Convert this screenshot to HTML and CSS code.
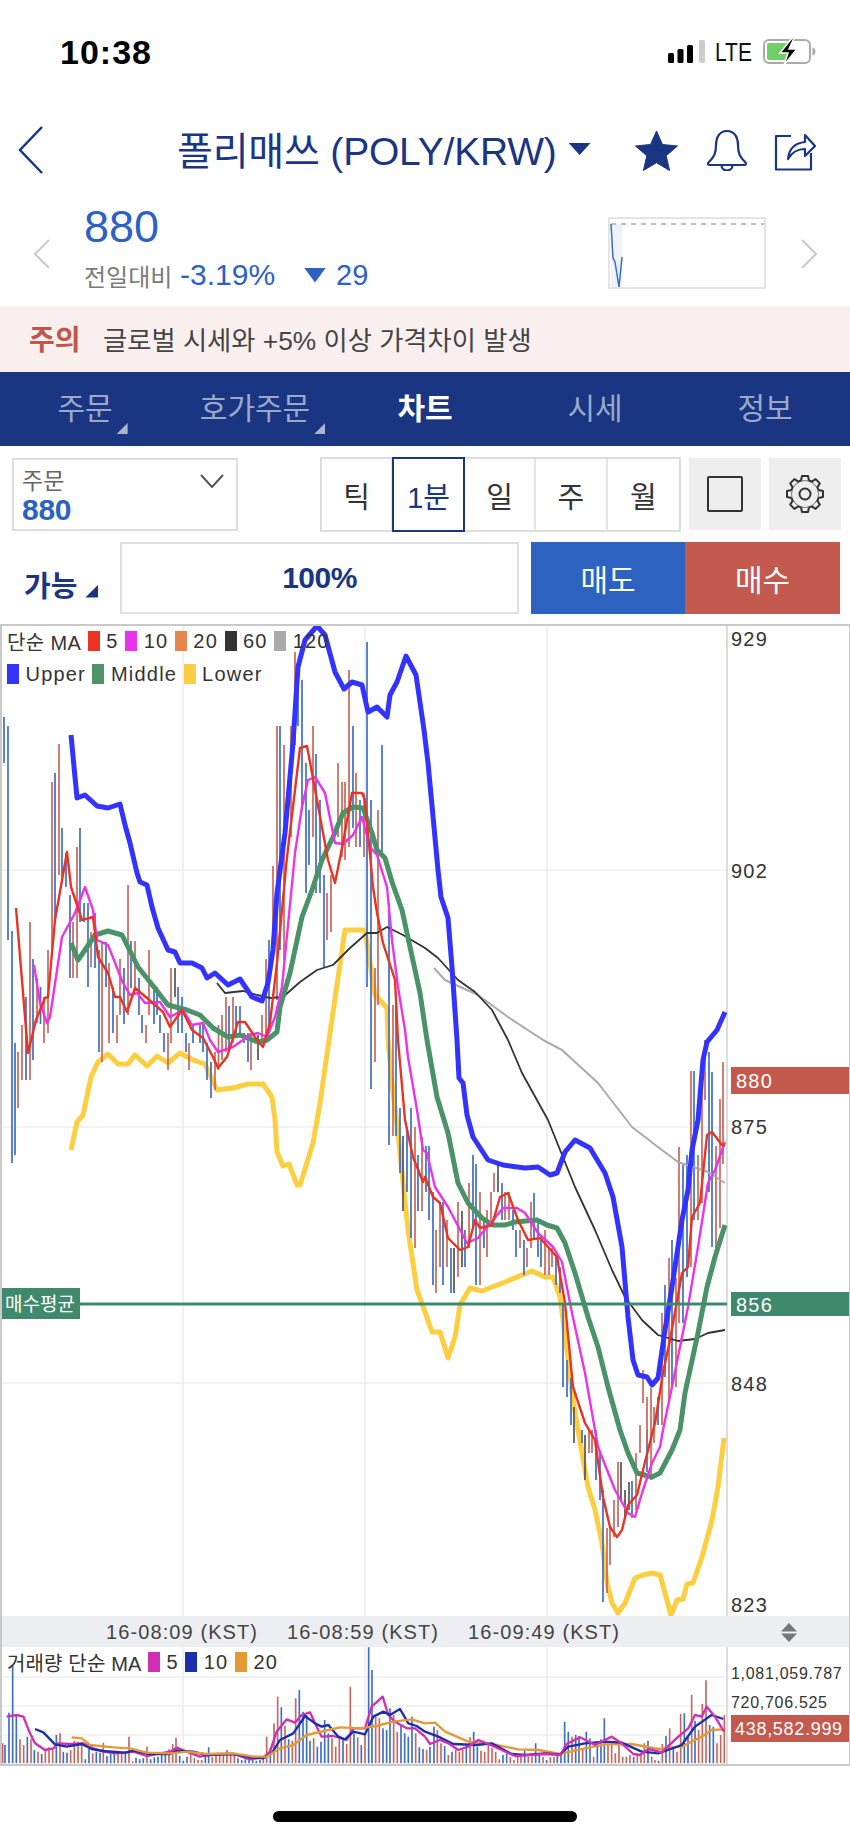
FILE: index.html
```html
<!DOCTYPE html>
<html lang="ko">
<head>
<meta charset="utf-8">
<title>폴리매쓰 (POLY/KRW)</title>
<link rel="stylesheet" href="styles.css">
</head>
<body>
<div class="page">
  <div class="status">
    <div class="clock">10:38</div>
    <div class="status-right">
      <svg class="signal" width="37" height="24" viewBox="0 0 37 24"><rect class="s-on" x="0" y="13" width="6" height="10" rx="1.5"/><rect class="s-on" x="9.500" y="9" width="6" height="14" rx="1.500"/><rect class="s-on" x="19" y="5" width="6" height="18" rx="1.500"/><rect class="s-off" x="31" y="0" width="6" height="23" rx="1.500"/></svg>
      <span class="lte">LTE</span>
      <svg class="battery" width="53" height="28" viewBox="0 0 53 28"><rect class="bat-body" x="1" y="2" width="46" height="23" rx="5"/><rect class="bat-fill" x="4" y="5" width="23" height="17" rx="2"/><path class="bat-cap" d="M49.500 9.500c2 .5 3 2 3 4s-1 3.500-3 4z"/><path class="bat-bolt" d="M29 0 17 15h8l-4 12 13-16h-8l5-11z"/></svg>
    </div>
  </div>

  <div class="appbar">
    <svg class="back" width="26" height="50" viewBox="0 0 26 50"><path d="M24 2 2 25l22 23"/></svg>
    <div class="title">폴리매쓰 (POLY/KRW)</div>
    <span class="caret"></span>
    <svg class="star" width="45" height="41" viewBox="0 0 45 41"><path d="M22.500 1l6 13.500 15 1.500-11.300 9.800 3.400 14.700-13.100-7.800-13.100 7.800 3.400-14.700L1.500 16l15-1.500z"/></svg>
    <svg class="bell" width="42" height="42" viewBox="0 0 42 42"><path d="M21 2c-8 0-11 7-11 14 0 9-2 12-7.500 17.500-1 1-.5 2.500 1 2.500h35c1.500 0 2-1.500 1-2.500C34 28 32 25 32 16c0-7-3-14-11-14z"/><path d="M15.500 36c0 3.500 2.500 5.500 5.500 5.500s5.500-2 5.500-5.500"/></svg>
    <svg class="share" width="42" height="42" viewBox="0 0 42 42"><path d="M17 7H2v33.500h35V24"/><path d="M14 30c1-10 7-16 17-17V6l10 11-10 10v-7c-8 0-13 3-17 10z"/></svg>
  </div>

  <div class="quote">
    <svg class="q-arrow" width="18" height="30" viewBox="0 0 18 30"><path d="M16 1 2 15l14 14"/></svg>
    <div class="q-info">
      <div class="q-price">880</div>
      <div class="q-change"><span class="q-label">전일대비</span><span class="q-pct">-3.19%</span><span class="q-down"></span><span class="q-diff">29</span></div>
    </div>
    <svg class="spark" width="158" height="72" viewBox="0 0 158 72"><rect class="sp-box" x="1" y="1" width="156" height="70"/><path class="sp-fill" d="M3 7h11v63H3z"/><path class="sp-dash" d="M3 7h153"/><path class="sp-line" d="M3 7l2 34 2 4 4 25 3-30"/></svg>
    <svg class="q-arrow" width="18" height="30" viewBox="0 0 18 30"><path d="M2 1l14 14L2 29"/></svg>
  </div>

  <div class="notice"><b class="notice-tag">주의</b><span class="notice-text">글로벌 시세와 +5% 이상 가격차이 발생</span></div>

  <nav class="tabs">
    <div class="tab"><span class="tab-label has-menu">주문</span></div>
    <div class="tab"><span class="tab-label has-menu">호가주문</span></div>
    <div class="tab active"><span class="tab-label">차트</span></div>
    <div class="tab"><span class="tab-label">시세</span></div>
    <div class="tab"><span class="tab-label">정보</span></div>
  </nav>

  <div class="controls">
    <div class="select">
      <div class="select-text"><div class="select-label">주문</div><div class="select-value">880</div></div>
      <svg class="select-chev" width="24" height="14" viewBox="0 0 24 14"><path d="M1 1l11 12L23 1"/></svg>
    </div>
    <div class="seg">
      <div class="cell">틱</div><div class="cell on">1분</div><div class="cell">일</div><div class="cell">주</div><div class="cell last">월</div>
    </div>
    <div class="tool"><span class="tool-square"></span></div>
    <div class="tool">
      <svg class="gear" width="40" height="40" viewBox="0 0 40 40">
        <defs><path id="tooth" d="M16 6.500 17 2h6l1 4.500"/></defs>
        <circle class="g-ring" cx="20" cy="20" r="14"/>
        <circle class="g-hole" cx="20" cy="20" r="5.500"/>
        <use href="#tooth" class="g-tooth"/>
        <use href="#tooth" class="g-tooth" transform="rotate(45 20 20)"/>
        <use href="#tooth" class="g-tooth" transform="rotate(90 20 20)"/>
        <use href="#tooth" class="g-tooth" transform="rotate(135 20 20)"/>
        <use href="#tooth" class="g-tooth" transform="rotate(180 20 20)"/>
        <use href="#tooth" class="g-tooth" transform="rotate(225 20 20)"/>
        <use href="#tooth" class="g-tooth" transform="rotate(270 20 20)"/>
        <use href="#tooth" class="g-tooth" transform="rotate(315 20 20)"/>
      </svg>
    </div>
  </div>

  <div class="trade">
    <div class="avail"><span>가능</span><i class="avail-tri"></i></div>
    <div class="pct">100%</div>
    <div class="btn sell">매도</div>
    <div class="btn buy">매수</div>
  </div>

  <section class="chart">
    <div class="legend main-legend">
      <div class="legend-row"><span class="lg-main">단순 MA</span><i class="sw c-red"></i><span>5</span><i class="sw c-mag"></i><span>10</span><i class="sw c-ora"></i><span>20</span><i class="sw c-blk"></i><span>60</span><i class="sw c-gry"></i><span>120</span></div>
      <div class="legend-row"><i class="sw c-blu"></i><span>Upper</span><i class="sw c-grn"></i><span>Middle</span><i class="sw c-yel"></i><span>Lower</span></div>
    </div>
    <svg class="main-plot" width="850" height="992" viewBox="0 624 850 992">
      <path class="grid" d="M2 870H727M2 1127H727M2 1383H727M183 624V1616M365 624V1616M547 624V1616"/>
      <path class="axis" d="M727 624V1616"/>
      <polyline class="l-lower" points="71,1150 77,1122 83,1115 91,1077 98,1062 108,1054 118,1064 128,1064 135,1055 147,1066 157,1056 168,1063 180,1053 193,1060 205,1064 217,1090 233,1088 248,1084 263,1084 272,1097 275,1120 277,1152 283,1166 289,1164 297,1185 300,1185 313,1143 320,1103 330,1033 345,930 365,930 375,995 387,1008 388,1040 392,1083 398,1133 408,1230 417,1290 425,1312 432,1332 440,1332 448,1358 455,1337 460,1305 470,1288 482,1291 505,1282 532,1271 545,1277 553,1277 560,1297 567,1350 573,1400 578,1430 588,1487 595,1510 602,1543 607,1583 612,1603 618,1613 625,1603 635,1578 643,1575 652,1573 660,1575 665,1593 671,1615 677,1600 683,1599 687,1584 693,1583 702,1557 712,1520 718,1487 724,1438"/>
      <path class="w-blue" d="M4 717V763M8 726V940M12 931V1163M15 1043V1155M26 997V1080M33 959V1060M40.500 987V1024M55 773V922M62 828V877M66 853V887M70 895V978M80 828V922M84 903V922M88 903V987M95 913V968M99 950V1052M106 942V987M113 987V1033M124 968V1024M131 941V988M139 978V1015M142 1015V1033M154 987V1024M157 987V1015M160 1015V1033M164 1033V1052M178 987V1033M182 997V1033M186 1033V1052M193 1024V1043M200 1024V1043M203 1024V1052M207 1043V1080M211 1062V1098M229 1006V1052M236 1006V1033M240 1006V1033M244 1033V1043M248 1033V1062M269 940V1033M280 726V950M298 670V726M302 680V810M306 763V893M309 810V865M316 754V893M320 800V893M324 875V968M353 726V828M360 800V847M367 642V987M371 800V1089M382 745V858M389 903V1145M396 1005V1136M400 1108V1173M407 1127V1192M411 1108V1238M418 1155V1211M426 1146V1192M429 1146V1220M433 1192V1285M443 1202V1285M451 1248V1293M465 1230V1267M473 1155V1230M476 1164V1285M484 1220V1248M502 1183V1220M513 1210V1230M516 1230V1257M524 1240V1275M534 1193V1240M538 1220V1257M541 1237V1267M556 1257V1285M560 1267V1293M563 1303V1387M567 1360V1397M571 1378V1425M582 1430V1443M596 1430V1480M600 1453V1500M603 1490V1602M632 1481V1518M647 1430V1472M658 1397V1425M665 1285V1377M672 1240V1387M683 1165V1323M687 1155V1277M694 1071V1220M709 1052V1192M712 1072V1247"/>
      <path class="w-red" d="M18 1052V1108M22 1025V1080M30 922V1080M37 978V1023M44 997V1043M48 950V1033M52 782V950M59 744V875M73 922V978M77 847V978M91 932V967M102 943V1062M109 963V1043M117 1015V1043M120 959V1015M128 885V1015M135 941V987M146 1025V1043M149 950V1015M168 1033V1070M171 968V1043M189 1043V1070M215 1052V1090M218.500 1025V1070M222 1015V1060M226 997V1052M233 997V1043M251 1033V1070M262 1015V1043M266 959V1043M273 866V960M277 726V1000M284 745V960M291 726V837M295 652V745M313 726V837M327 893V940M331 875V932M338 763V837M342 782V857M345 782V860M349 670V847M356 773V847M364 793V857M375 968V1062M378 810V1005M393 1005V1136M415 1127V1248M422 1137V1211M436 1230V1293M440 1202V1267M447 1220V1267M458 1202V1277M469 1183V1248M480 1192V1285M487 1210V1257M491 1192V1220M494 1173V1192M505 1192V1220M509 1192V1220M520 1230V1248M527 1248V1267M531 1202V1248M545 1230V1275M549 1248V1275M552 1248V1267M589 1430V1453M592 1430V1453M607 1528V1593M610 1528V1565M614 1500V1537M618 1462V1527M636 1453V1510M640 1425V1453M643 1370V1403M647 1397V1445M651 1388V1480M654 1407V1443M662 1313V1425M669 1258V1400M676 1278V1387M679 1147V1323M691 1071V1267M698 1155V1220M702 1080V1203M705 1040V1100M716 1146V1257M720 1099V1228M723 1062V1164"/>
      <path class="w-blk" d="M175 968V997M258 1035V1060M403 1136V1211M454 1248V1293M462 1211V1267M498 1164V1192M574 1407V1443M585 1435V1480M621 1462V1500M625 1490V1518M629 1482V1510"/>
      <polyline class="l-gray" points="434,968 445,980 478,995 508,1017 543,1040 562,1050 598,1083 632,1127 658,1147 678,1162 708,1172 725,1183"/>
      <polyline class="l-black" points="217,983 225,993 243,991 257,995 270,998 283,997 300,982 317,970 333,965 350,948 367,933 377,933 387,927 403,935 425,948 438,958 458,980 475,992 492,1010 508,1040 522,1073 548,1120 575,1187 595,1230 612,1270 625,1297 642,1320 658,1335 678,1341 695,1339 708,1333 725,1330"/>
      <polyline class="l-middle" points="71,943 78,960 85,950 95,935 108,931 122,935 138,967 150,982 168,1005 187,1010 200,1015 213,1028 228,1037 240,1035 258,1042 267,1040 277,1032 280,1007 290,973 302,917 312,890 322,860 333,837 343,813 353,807 363,808 372,833 377,850 385,858 392,882 402,910 410,947 420,993 427,1040 437,1097 448,1133 458,1183 468,1203 482,1218 493,1225 505,1225 515,1222 537,1220 547,1225 557,1228 565,1243 575,1273 588,1317 598,1347 608,1387 620,1430 628,1453 637,1473 652,1477 660,1473 672,1450 680,1430 685,1393 698,1333 707,1287 715,1257 725,1225"/>
      <polyline class="l-mag" points="34,965 40,1003 47,1023 50,1017 62,937 75,913 85,887 93,910 97,940 108,945 123,983 130,995 137,993 145,1003 160,1002 170,1017 183,1010 192,1025 203,1023 210,1040 218,1052 233,1047 250,1035 258,1033 267,1037 275,1017 282,987 295,853 302,807 308,780 315,777 325,793 335,843 343,844 353,835 362,817 370,847 377,855 387,887 392,940 398,987 405,1030 408,1057 417,1110 423,1150 427,1153 435,1187 448,1207 467,1243 478,1238 503,1208 517,1208 525,1213 538,1233 553,1247 562,1262 572,1313 585,1373 598,1447 615,1490 628,1513 635,1517 642,1493 652,1463 660,1447 663,1430 672,1387 688,1307 698,1247 708,1183 715,1170 725,1142"/>
      <polyline class="l-red" points="16,908 28,1053 36,1020 45,998 48,997 55,920 67,852 71,887 82,920 93,917 98,957 108,973 115,997 120,997 127,1012 135,988 147,998 163,1012 170,1027 182,1010 192,1030 203,1038 213,1057 218,1068 227,1057 238,1022 245,1022 257,1040 263,1047 270,1023 277,963 287,857 297,773 300,748 307,746 317,800 328,860 335,883 343,843 352,793 362,793 365,800 368,833 373,887 377,913 383,943 395,980 398,1040 405,1120 413,1157 423,1182 425,1177 433,1197 440,1203 448,1238 460,1250 468,1247 475,1220 480,1228 492,1225 500,1197 508,1193 518,1220 528,1240 540,1238 557,1257 565,1303 573,1387 585,1423 595,1440 603,1497 610,1527 617,1537 622,1530 628,1505 637,1495 645,1462 655,1423 663,1373 670,1340 682,1273 688,1267 692,1217 700,1203 707,1135 712,1132 722,1145 725,1145"/>
      <polyline class="l-upper" points="71,735 75,777 77,798 85,795 97,806 108,808 120,804 125,825 130,843 137,873 140,882 147,885 152,907 158,928 168,950 175,952 180,963 192,963 202,968 207,978 215,973 228,985 240,979 252,997 262,1001 268,983 273,950 277,893 285,833 293,743 298,667 305,640 317,626 325,635 335,672 344,689 352,682 362,685 368,712 377,707 387,717 390,695 397,682 406,656 416,675 424,730 428,763 434,827 438,870 441,897 448,918 452,967 457,1040 459,1078 463,1083 467,1115 473,1137 488,1160 503,1165 525,1168 538,1167 550,1175 557,1173 565,1152 575,1140 590,1148 605,1173 613,1197 622,1247 628,1317 633,1360 638,1375 647,1377 652,1385 658,1378 665,1330 672,1287 682,1220 688,1190 692,1150 698,1120 703,1060 707,1042 717,1030 725,1012"/>
      <path class="avg-line" d="M2 1304H727"/>
      <rect class="tag-green" x="2" y="1288" width="78" height="31"/>
      <text class="tag-kr" x="5" y="1311">매수평균</text>
      <text class="ax" x="731" y="646">929</text>
      <text class="ax" x="731" y="878">902</text>
      <rect class="tag-red" x="731" y="1067" width="118" height="27"/>
      <text class="ax-w" x="736" y="1088">880</text>
      <text class="ax" x="731" y="1134">875</text>
      <rect class="tag-green" x="731" y="1292" width="118" height="24"/>
      <text class="ax-w" x="736" y="1312">856</text>
      <text class="ax" x="731" y="1391">848</text>
      <text class="ax" x="731" y="1612">823</text>
    </svg>
    <div class="timebar">
      <span class="time">16-08:09 (KST)</span><span class="time">16-08:59 (KST)</span><span class="time">16-09:49 (KST)</span>
      <svg class="updown" width="18" height="19" viewBox="0 0 18 19"><path d="M9 0l8 8.500H1zM1 10.500h16L9 19z"/></svg>
    </div>
    <div class="legend vol-legend">
      <div class="legend-row"><span class="lg-vol">거래량 단순 MA</span><i class="sw c-vm"></i><span>5</span><i class="sw c-vb"></i><span>10</span><i class="sw c-vo"></i><span>20</span></div>
    </div>
    <svg class="vol-plot" width="850" height="119" viewBox="0 1647 850 119">
      <path class="grid" d="M2 1677H727M2 1706H727M2 1735H727M183 1647V1764M365 1647V1764M547 1647V1764"/>
      <path class="axis" d="M727 1647V1764"/>
      <g transform="translate(0 1600) scale(.33333)">
        <path class="v-blue" d="M15 490V435M27 490V338M38 490V197M49 490V345M82 490V410M103 490V450M125 490V462M169 490V405M190 490V455M201 490V458M256 490V478M267 490V447M289 490V455M300 490V458M321 490V468M332 490V462M343 490V458M376 490V460M408 490V473M419 490V478M430 490V475M452 490V478M463 490V472M474 490V470M485 490V465M496 490V460M539 490V468M550 490V482M561 490V470M616 490V470M626 490V442M714 490V475M725 490V480M736 490V478M747 490V476M758 490V478M769 490V482M780 490V480M811 490V445M844 490V322M866 490V418M898 490V270M909 490V335M920 490V345M930 490V422M952 490V440M963 490V425M974 490V360M985 490V400M1029 490V420M1062 490V400M1084 490V435M1106 490V142M1116 490V210M1149 490V385M1160 490V390M1170 490V325M1203 490V373M1214 490V400M1225 490V410M1236 490V350M1258 490V442M1269 490V447"/>
        <path class="v-red" d="M8 490V430M60 490V418M71 490V435M93 490V418M114 490V455M136 490V450M147 490V442M158 490V445M180 490V400M212 490V450M223 490V422M234 490V425M245 490V425M278 490V460M310 490V428M354 490V460M365 490V460M387 490V410M398 490V484M441 490V440M507 490V448M518 490V432M528 490V413M572 490V460M583 490V475M594 490V480M605 490V480M637 490V470M648 490V468M659 490V465M670 490V460M681 490V450M692 490V465M703 490V465M790 490V470M800 490V410M822 490V370M833 490V290M855 490V378M877 490V422M887 490V295M941 490V415M996 490V415M1007 490V440M1018 490V410M1040 490V432M1051 490V260M1073 490V412M1095 490V405M1127 490V350M1138 490V355M1181 490V345M1192 490V395M1247 490V400"/>
        <g transform="translate(1275 0)">
          <path class="v-blue" d="M15 490V440M27 490V380M59 490V438M81 490V455M124 490V437M146 490V395M157 490V440M234 490V465M245 490V460M299 490V452M332 490V430M343 490V462M365 490V480M397 490V468M408 490V465M419 490V365M430 490V395M452 490V405M462 490V408M484 490V395M495 490V415M517 490V440M528 490V418M538 490V355M626 490V470M669 490V422M701 490V482M723 490V408M745 490V440M778 490V340M789 490V410M810 490V362M854 490V375M865 490V380"/>
          <path class="v-red" d="M5 490V450M37 490V390M48 490V430M70 490V465M92 490V450M103 490V455M113 490V450M135 490V412M168 490V452M179 490V455M190 490V430M201 490V445M212 490V455M223 490V478M256 490V470M267 490V480M278 490V470M288 490V470M310 490V470M321 490V470M354 490V470M376 490V472M387 490V470M441 490V410M473 490V445M506 490V470M549 490V430M560 490V435M571 490V460M582 490V432M593 490V470M604 490V470M615 490V465M637 490V462M648 490V465M658 490V430M680 490V470M690 490V480M712 490V432M734 490V385M756 490V455M767 490V342M800 490V285M821 490V390M832 490V312M843 490V241M876 490V430M887 490V405M898 490V345"/>
          <polyline class="v-ora" points="0,370 30,368 60,395 130,425 200,432 280,448 340,450 405,462 480,445 540,433 620,432 700,447 770,440 830,410 860,390 897,388"/>
          <polyline class="v-nav" points="0,395 40,410 85,432 155,435 200,430 260,462 300,465 360,460 405,463 430,440 480,430 540,425 590,428 650,455 700,460 770,435 810,380 860,345 895,357"/>
          <polyline class="v-pnk" points="0,410 15,432 45,420 70,430 100,450 130,440 160,420 190,432 230,450 270,468 320,465 360,462 405,465 425,432 465,412 510,435 560,410 590,430 625,462 645,465 670,447 710,457 760,410 790,385 810,345 830,350 845,320 870,350 897,395"/>
        </g>
        <polyline class="v-pnk" points="20,350 50,345 70,350 90,400 105,430 135,450 160,445 175,430 210,432 250,430 280,445 310,455 345,460 375,458 400,455 440,468 480,460 510,455 530,443 560,455 600,470 650,462 700,462 750,478 790,472 810,455 830,395 860,358 885,368 905,345 930,337 945,370 965,410 1000,408 1040,420 1060,385 1095,385 1115,320 1148,290 1165,345 1185,365 1220,385 1245,385 1275,410"/>
        <polyline class="v-nav" points="105,387 130,397 165,433 200,440 245,432 275,447 310,453 375,458 400,452 450,462 510,462 530,452 580,455 620,465 700,462 750,472 790,475 815,460 840,420 880,400 915,348 945,370 965,380 985,375 1015,410 1035,418 1060,395 1095,403 1120,350 1150,335 1170,345 1200,327 1225,370 1250,378 1275,395"/>
        <polyline class="v-ora" points="215,412 245,415 270,435 340,442 390,445 440,458 510,460 560,455 620,462 700,460 760,470 800,470 840,445 880,435 920,405 985,390 1020,382 1080,385 1130,378 1180,365 1235,358 1275,370"/>
      </g>
      <text class="ax-s" x="731" y="1679">1,081,059.787</text>
      <text class="ax-s" x="731" y="1708">720,706.525</text>
      <rect class="tag-red" x="731" y="1715" width="118" height="27"/>
      <text class="ax-t" x="735" y="1735">438,582.999</text>
    </svg>
  </section>

  <div class="home-row"><span class="home"></span></div>
</div>
</body>
</html>
```
FILE: styles.css
```css
* { box-sizing: border-box; }
html, body { margin: 0; padding: 0; background: #fff; }
body { font-family: "Liberation Sans", "Noto Sans CJK KR", sans-serif; color: #333; }
.page { width: 850px; height: 1841px; overflow: hidden; }

/* status bar */
.status { height: 104px; display: flex; align-items: center; justify-content: space-between; padding: 0 34px 0 60px; }
.clock { font-size: 34px; font-weight: 700; color: #000; letter-spacing: 1px; }
.status-right { display: flex; align-items: center; }
.signal { margin-top: -1px; }
.s-on { fill: #000; }
.s-off { fill: #ccc; }
.lte { display: inline-block; font-size: 25px; color: #111; margin: 0 10px; width: 38px; transform: scaleX(.84); transform-origin: left center; }
.battery { margin-top: -1px; }
.bat-body { fill: none; stroke: #aaa; stroke-width: 2; }
.bat-fill { fill: #6fd06a; }
.bat-cap { fill: #aaa; }
.bat-bolt { fill: #000; stroke: #fff; stroke-width: 1.5; }

/* app bar */
.appbar { height: 92px; display: flex; align-items: center; padding-left: 18px; color: #1a3683; }
.back path { fill: none; stroke: #1a3683; stroke-width: 2.5; }
.title { font-size: 39px; margin: -5px 0 0 133px; white-space: nowrap; letter-spacing: -.2px; }
.caret { margin-left: 12px; width: 22px; height: 12px; background: #1a3683; clip-path: polygon(0 0, 100% 0, 50% 100%); margin-top: -2px; }
.star { margin-left: 43px; }
.star path { fill: #1a3683; stroke: #1a3683; stroke-width: 1; stroke-linejoin: round; }
.bell { margin-left: 27px; }
.bell path, .share path { fill: none; stroke: #1a3683; stroke-width: 2.2; stroke-linejoin: round; }
.share { margin-left: 26px; }

/* quote */
.quote { height: 110px; display: flex; align-items: flex-start; padding: 9px 0 0 33px; }
.q-arrow { margin-top: 34px; }
.q-arrow path { fill: none; stroke: #ccc; stroke-width: 2.2; }
.q-info { width: 524px; margin-left: 33px; }
.q-price { font-size: 45px; line-height: 44px; color: #2d62c4; }
.q-change { display: flex; align-items: center; margin-top: 11px; height: 30px; }
.q-label { font-size: 24px; color: #7b7b7b; width: 96px; white-space: nowrap; }
.q-pct { font-size: 30px; color: #2d62c4; width: 124px; white-space: nowrap; }
.q-down { width: 22px; height: 15px; background: #2d62c4; clip-path: polygon(0 0, 100% 0, 50% 100%); }
.q-diff { font-size: 29px; color: #2d62c4; margin-left: 10px; }
.spark { margin-top: 12px; margin-right: 34px; }
.sp-box { fill: #fff; stroke: #e4e4e4; stroke-width: 2; }
.sp-fill { fill: #eef3fb; }
.sp-dash { stroke: #aaa; stroke-width: 1.5; stroke-dasharray: 5 5; fill: none; }
.sp-line { fill: none; stroke: #3b6cc8; stroke-width: 1.5; }

/* notice */
.notice { height: 66px; background: #f9efef; display: flex; align-items: center; padding: 0 0 2px 29px; }
.notice-tag { font-size: 28px; color: #c0564a; width: 74px; }
.notice-text { font-size: 26.3px; color: #444; white-space: nowrap; }

/* tabs */
.tabs { height: 74px; background: #1a3683; display: grid; grid-template-columns: repeat(5, 1fr); }
.tab { display: flex; align-items: center; justify-content: center; color: #9ba9c9; font-size: 30px; }
.tab.active { color: #fff; font-weight: 700; }
.tab-label { position: relative; line-height: 32px; }
.has-menu::after { content: ""; position: absolute; left: calc(100% + 4px); top: 30px; width: 11px; height: 11px; background: #a9b5d0; clip-path: polygon(100% 0, 100% 100%, 0 100%); }

/* controls */
.controls { height: 96px; display: flex; align-items: flex-start; padding: 11px 0 0 12px; }
.select { width: 226px; height: 73px; margin-top: 1px; border: 2px solid #ddd; display: flex; justify-content: space-between; padding: 9px 12px 0 8px; }
.select-label { font-size: 23px; line-height: 24px; color: #666; }
.select-value { font-size: 30px; font-weight: 700; line-height: 33px; color: #2d62c4; letter-spacing: -.3px; }
.select-chev { margin-top: 5px; }
.select-chev path { fill: none; stroke: #555; stroke-width: 2; }
.seg { width: 361px; height: 75px; margin-left: 82px; border: 2px solid #ddd; display: grid; grid-template-columns: repeat(5, 1fr); }
.cell { display: flex; align-items: center; justify-content: center; font-size: 29px; color: #333; border-right: 2px solid #e4e4e4; }
.cell.last { border-right: 0; }
.cell.on { margin: -2px 0 -2px -1px; border: 2px solid #1a3683; color: #1a3683; position: relative; }
.tool { width: 72px; height: 72px; margin-top: 1px; margin-left: 8px; background: #eee; display: flex; align-items: center; justify-content: center; }
.tool-square { width: 36px; height: 36px; border: 2.5px solid #333; border-radius: 2px; }
.g-ring { fill: none; stroke: #333; stroke-width: 2; }
.g-hole { fill: none; stroke: #333; stroke-width: 2; }
.g-tooth { fill: #eee; stroke: #333; stroke-width: 2; stroke-linejoin: round; }

/* trade */
.trade { height: 72px; margin-bottom: 10px; display: flex; align-items: stretch; padding-left: 24px; }
.avail { width: 96px; display: flex; align-items: center; color: #1a3683; font-size: 29px; font-weight: 700; padding-top: 12px; white-space: nowrap; }
.avail-tri { margin: 14px 0 0 8px; width: 13px; height: 13px; background: #1a3683; clip-path: polygon(100% 0, 100% 100%, 0 100%); }
.pct { width: 399px; margin-right: 12px; border: 2px solid #e0e0e0; display: flex; align-items: center; justify-content: center; color: #1a3683; font-size: 30px; font-weight: 700; letter-spacing: -.5px; }
.btn { width: 154px; display: flex; align-items: center; justify-content: center; color: #fff; font-size: 30px; }
.sell { background: #2d62c0; }
.buy { background: #c45a4d; width: 155px; }

/* chart */
.chart { position: relative; height: 1142px; }
.chart::after { content: ""; position: absolute; inset: 0; border: 2px solid #c9c9c9; border-right-width: 1px; pointer-events: none; }
.chart svg { display: block; }
.legend { position: absolute; left: 7px; z-index: 2; font-size: 20px; letter-spacing: 1.2px; color: #333; }
.main-legend { top: 7px; display: flex; flex-direction: column; gap: 13px; }
.vol-legend { top: 1028px; }
.legend-row { display: flex; align-items: center; gap: 6.5px; height: 20px; white-space: nowrap; }
.lg-main { letter-spacing: .4px; }
.lg-vol { letter-spacing: .15px; }
.sw { width: 12px; height: 20px; display: block; }
.c-red { background: #ea3323; }
.c-mag { background: #ea33ea; }
.c-ora { background: #e5874d; }
.c-blk { background: #333; }
.c-gry { background: #aaa; }
.c-blu { background: #3333ff; }
.c-grn { background: #4f9467; }
.c-yel { background: #fbcd45; }
.c-vm { background: #cf2fb0; }
.c-vb { background: #1c2faa; }
.c-vo { background: #e39a35; }

.grid { fill: none; stroke: #eee; stroke-width: 1.6; }
.axis { fill: none; stroke: #ddd; stroke-width: 2; }
polyline { fill: none; stroke-linejoin: round; stroke-linecap: butt; }
.l-upper { stroke: #3333ff; stroke-width: 5; }
.l-middle { stroke: #4a9268; stroke-width: 5; }
.l-lower { stroke: #fdcf40; stroke-width: 5; }
.l-red { stroke: #ea3323; stroke-width: 2.4; }
.l-mag { stroke: #ea33ea; stroke-width: 2.4; }
.l-black { stroke: #333; stroke-width: 1.8; }
.l-gray { stroke: #aaa; stroke-width: 2; }
.w-blue { fill: none; stroke: #3f6ec6; stroke-width: 1.7; }
.w-red { fill: none; stroke: #c8675c; stroke-width: 1.7; }
.w-blk { fill: none; stroke: #555; stroke-width: 1.7; }
.avg-line { fill: none; stroke: #3f8a6c; stroke-width: 3; }
.tag-green { fill: #3f8a6c; }
.tag-red { fill: #c45a4d; }
.tag-kr { font-size: 19px; fill: #fff; letter-spacing: 0; }
.ax { font-size: 20px; letter-spacing: 1.2px; fill: #333; }
.ax-w { font-size: 20px; letter-spacing: 1.2px; fill: #fff; }
.ax-s { font-size: 16px; letter-spacing: .7px; fill: #333; }
.ax-t { font-size: 18px; letter-spacing: .7px; fill: #fff; }
.timebar { height: 31px; background: #eceef2; display: flex; align-items: center; padding: 2px 0 0 106px; position: relative; font-size: 20px; letter-spacing: 1.1px; color: #444; }
.time { width: 181px; white-space: nowrap; }
.updown { position: absolute; left: 780px; top: 7px; }
.updown path { fill: #777; }
.v-blue { fill: none; stroke: #3f6ec6; stroke-width: 5; }
.v-red { fill: none; stroke: #c8675c; stroke-width: 5; }
.v-pnk { stroke: #cf2fb0; stroke-width: 7; }
.v-nav { stroke: #1c2faa; stroke-width: 7; }
.v-ora { stroke: #e39a35; stroke-width: 7; }

/* home indicator */
.home-row { height: 75px; display: flex; justify-content: center; padding-top: 45px; }
.home { width: 304px; height: 11px; border-radius: 6px; background: #000; }
```
